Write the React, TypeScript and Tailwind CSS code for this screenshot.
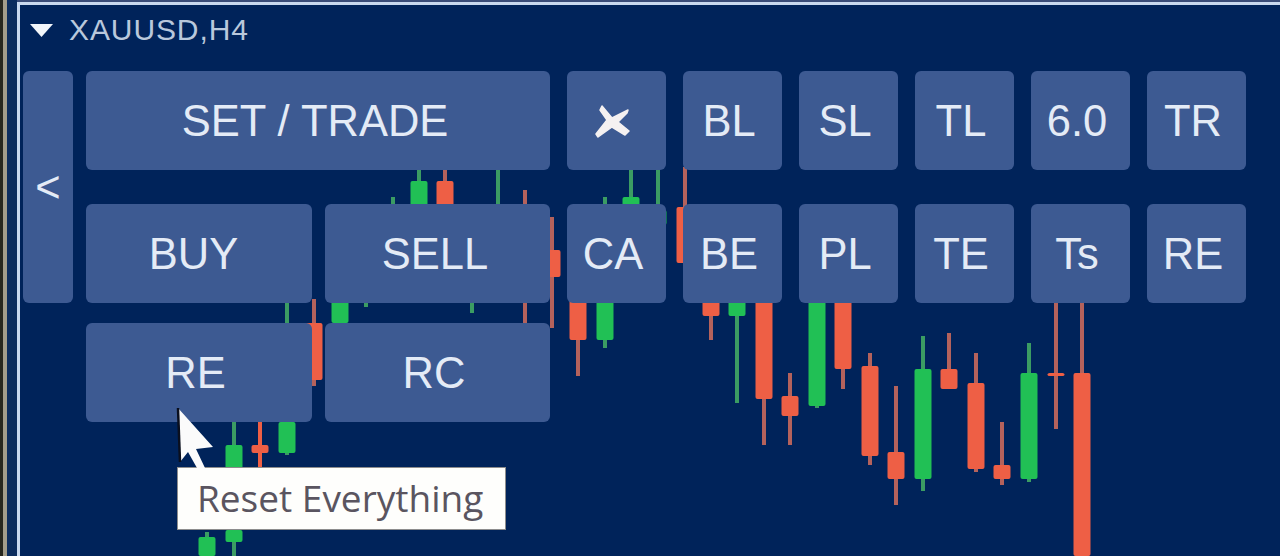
const RED = '#ee5f45'
const RED_WICK = '#b4625c'
const GREEN = '#21c055'
const GREEN_WICK = '#3b9c63'

// x center, wick top/bottom, body top/bottom
const candles = [
  { x: 207, up: true, hi: 532, lo: 556, open: 537, close: 556 },
  { x: 234, up: true, hi: 422, lo: 470, open: 445, close: 470 },
  { x: 234, up: true, hi: 525, lo: 556, open: 530, close: 542 },
  { x: 260, up: false, hi: 422, lo: 470, open: 445, close: 453, wick: RED },
  { x: 287, up: true, hi: 300, lo: 455, open: 422, close: 453 },
  { x: 314, up: false, hi: 299, lo: 386, open: 323, close: 380 },
  { x: 340, up: true, hi: 290, lo: 340, open: 300, close: 323 },
  { x: 366, up: true, hi: 290, lo: 307, open: 295, close: 300 },
  { x: 393, up: true, hi: 197, lo: 230, open: 210, close: 225 },
  { x: 419, up: true, hi: 170, lo: 230, open: 181, close: 225 },
  { x: 445, up: false, hi: 170, lo: 230, open: 181, close: 225 },
  { x: 472, up: true, hi: 280, lo: 313, open: 285, close: 300 },
  { x: 498, up: true, hi: 165, lo: 230, open: 210, close: 225 },
  { x: 525, up: false, hi: 190, lo: 323, open: 210, close: 300 },
  { x: 552, up: false, hi: 217, lo: 328, open: 250, close: 277 },
  { x: 578, up: false, hi: 290, lo: 376, open: 295, close: 340 },
  { x: 605, up: true, hi: 197, lo: 348, open: 295, close: 340 },
  { x: 631, up: true, hi: 165, lo: 230, open: 197, close: 225 },
  { x: 658, up: true, hi: 165, lo: 230, open: 210, close: 225 },
  { x: 685, up: false, hi: 167, lo: 280, open: 207, close: 263 },
  { x: 711, up: false, hi: 290, lo: 340, open: 295, close: 316 },
  { x: 737, up: true, hi: 290, lo: 403, open: 295, close: 316 },
  { x: 764, up: false, hi: 290, lo: 445, open: 295, close: 399 },
  { x: 790, up: false, hi: 373, lo: 445, open: 396, close: 416 },
  { x: 817, up: true, hi: 290, lo: 408, open: 295, close: 406 },
  { x: 843, up: false, hi: 290, lo: 389, open: 295, close: 369 },
  { x: 870, up: false, hi: 353, lo: 465, open: 366, close: 456 },
  { x: 896, up: false, hi: 386, lo: 505, open: 452, close: 479 },
  { x: 923, up: true, hi: 336, lo: 491, open: 369, close: 479 },
  { x: 949, up: false, hi: 333, lo: 389, open: 369, close: 389 },
  { x: 976, up: false, hi: 353, lo: 472, open: 383, close: 469 },
  { x: 1002, up: false, hi: 422, lo: 485, open: 465, close: 479 },
  { x: 1029, up: true, hi: 343, lo: 482, open: 373, close: 479 },
  { x: 1056, up: false, hi: 295, lo: 429, open: 373, close: 376 },
  { x: 1082, up: false, hi: 295, lo: 556, open: 373, close: 556 },
]

function Chart() {
  return (
    <svg className="absolute left-0 top-0 h-[551px] w-[1260px]" viewBox="20 5 1260 551">
      {candles.map((c, i) => (
        <g key={i}>
          <rect
            x={c.x - 2}
            y={c.hi}
            width="4"
            height={c.lo - c.hi}
            fill={c.wick || (c.up ? GREEN_WICK : RED_WICK)}
          />
          <rect
            x={c.x - 8.5}
            y={c.open}
            width="17"
            height={c.close - c.open}
            rx="2"
            fill={c.up ? GREEN : RED}
          />
        </g>
      ))}
    </svg>
  )
}

function Btn({ label, className }: { label: React.ReactNode; className: string }) {
  return (
    <div className={`flex items-center justify-center rounded-[6px] bg-[#3d5a92] pt-[2px] text-[43.5px] leading-none text-[#e4ebf6] ${className}`}>
      {label}
    </div>
  )
}

const grid = ['x', 'BL', 'SL', 'TL', '6.0', 'TR', 'CA', 'BE', 'PL', 'TE', 'Ts', 'RE']

export default function App() {
  return (
    <div className="flex h-[556px] w-[1280px] overflow-hidden bg-[#00235a] font-['Liberation_Sans',sans-serif]">
      {/* terminal window edges */}
      <div className="w-[3px] bg-[#26261e]" />
      <div className="w-[4px] bg-[#a29c8a]" />
      <div className="w-[10px] bg-[#0b2c5e]" />

      <div className="flex flex-1 flex-col bg-[#3a4c78] pt-[2px]">
        <div className="relative flex-1 border-l-[3px] border-t-[3px] border-[#c9d9ef] bg-[#00235a]">
          <Chart />

          <div className="relative">
            {/* Header */}
            <div className="mb-[16px] flex h-[50px] items-center pl-[10px]">
              <svg width="23" height="13" viewBox="0 0 23 13">
                <path d="M0 0H23L11.5 13Z" fill="#f2f6fb" />
              </svg>
              <span className="ml-[16px] text-[30px] leading-none tracking-[0.9px] text-[#b9c8dc]">XAUUSD,H4</span>
            </div>

            {/* Buttons */}
            <div className="flex items-start pl-[3px]">
              <Btn label="<" className="h-[232px] w-[50px]" />
              <div className="ml-[13px] flex w-[464px] flex-col">
                <Btn label="SET / TRADE" className="h-[99px] pr-[6px]" />
                <div className="mt-[34px] flex gap-[13px]">
                  <Btn label="BUY" className="h-[99px] w-[226px] pr-[11px]" />
                  <Btn label="SELL" className="h-[99px] flex-1 pr-[5px]" />
                </div>
                <div className="mt-[20px] flex gap-[13px]">
                  <Btn label="RE" className="h-[99px] w-[226px] pr-[7px]" />
                  <Btn label="RC" className="h-[99px] flex-1 pr-[7px]" />
                </div>
              </div>
              <div className="ml-[17px] grid grid-cols-[repeat(6,99px)] gap-x-[17px] gap-y-[34px]">
                {grid.map((g, i) => (
                  <Btn
                    key={i}
                    className="h-[99px] pr-[7px]"
                    label={
                      g === 'x' ? (
                        <svg width="36" height="34" viewBox="0 0 36 34">
                          <path
                            d="M7 1L17 13L33 5L32 8L23 17L34 26L30 30L17 22L3 32L1 29L12 15L5 5Z"
                            fill="#f5f1f1"
                            stroke="#f5f1f1"
                            strokeWidth="1.5"
                            strokeLinejoin="round"
                          />
                        </svg>
                      ) : (
                        g
                      )
                    }
                  />
                ))}
              </div>
            </div>
          </div>

          {/* Tooltip */}
          <div className="absolute left-[157px] top-[462px] flex h-[63px] w-[329px] items-center border border-[#8d8d8d] bg-[#fefefc] pb-[2px] pl-[19px] font-['Open_Sans',sans-serif] text-[37px] leading-none text-[#5a5560]">
            Reset Everything
          </div>

          {/* Mouse cursor */}
          <svg className="absolute left-[154px] top-[398px]" width="45" height="70" viewBox="0 0 45 70">
            <path d="M4 5L39 44L22 46L31 65H23L14 49L6 59Z" fill="#fbfbfb" />
            <path d="M4 5L6 59" stroke="#0a0f1e" strokeWidth="2.5" fill="none" />
          </svg>
        </div>
      </div>
    </div>
  )
}
